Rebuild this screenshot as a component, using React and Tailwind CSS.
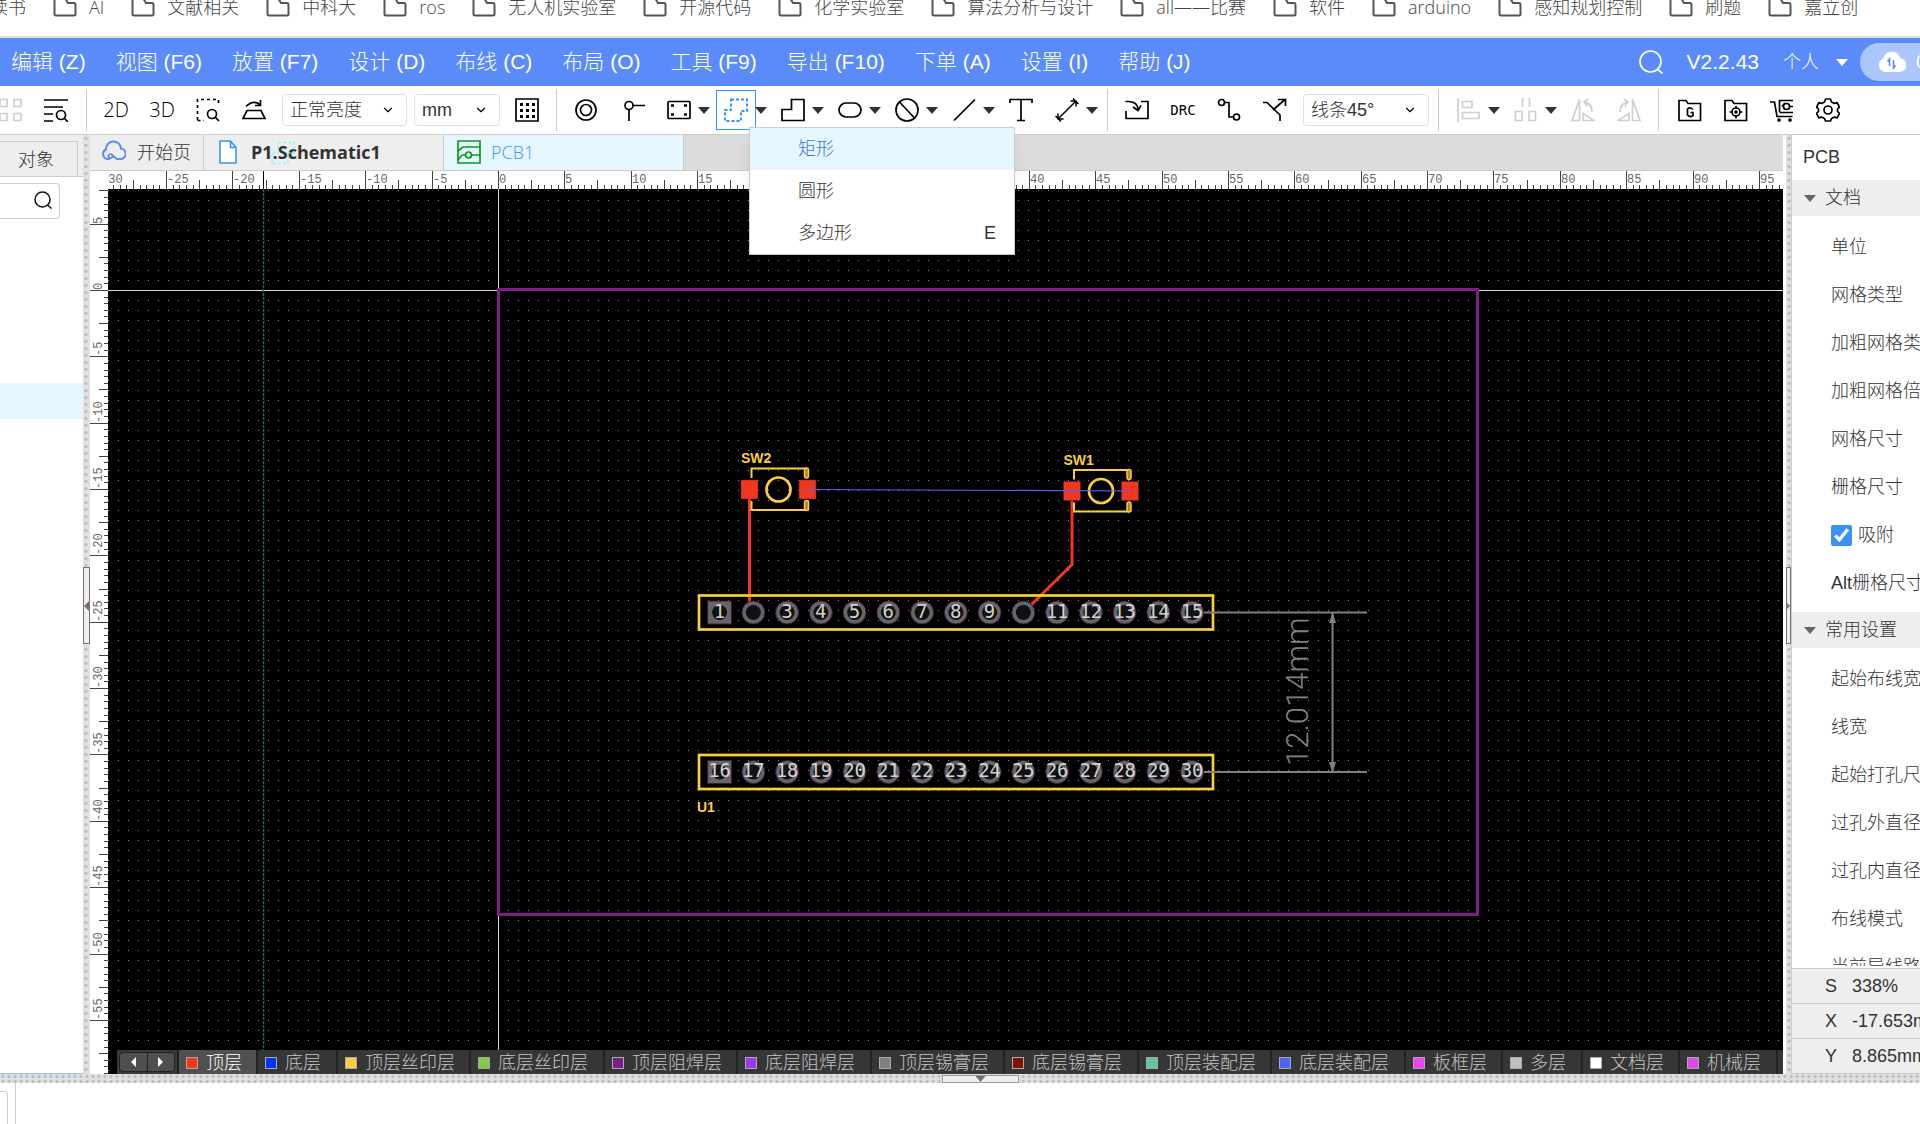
import React, { useState } from 'react'
import { ChevronDown } from 'lucide-react'

const bookmarks = ['AI', '文献相关', '中科大', 'ros', '无人机实验室', '开源代码', '化学实验室', '算法分析与设计', 'all——比赛', '软件', 'arduino', '感知规划控制', '刷题', '嘉立创']

const menus = ['编辑 (Z)', '视图 (F6)', '放置 (F7)', '设计 (D)', '布线 (C)', '布局 (O)', '工具 (F9)', '导出 (F10)', '下单 (A)', '设置 (I)', '帮助 (J)']

const layers = [
  { name: '顶层', color: 'bg-[#f0371f]' },
  { name: '底层', color: 'bg-[#0433ff]' },
  { name: '顶层丝印层', color: 'bg-[#fbcd3f]' },
  { name: '底层丝印层', color: 'bg-[#7fca4b]' },
  { name: '顶层阻焊层', color: 'bg-[#7b1f84]' },
  { name: '底层阻焊层', color: 'bg-[#9a38f5]' },
  { name: '顶层锡膏层', color: 'bg-[#808080]' },
  { name: '底层锡膏层', color: 'bg-[#7d150c]' },
  { name: '顶层装配层', color: 'bg-[#5fc79a]' },
  { name: '底层装配层', color: 'bg-[#4f62fb]' },
  { name: '板框层', color: 'bg-[#ee44f5]' },
  { name: '多层', color: 'bg-[#c0c0c0]' },
  { name: '文档层', color: 'bg-white' },
  { name: '机械层', color: 'bg-[#dd4ae8]' },
]

const docRows = ['单位', '网格类型', '加粗网格类型', '加粗网格倍数', '网格尺寸', '栅格尺寸']
const commonRows = ['起始布线宽度', '线宽', '起始打孔尺寸', '过孔外直径', '过孔内直径', '布线模式', '当前导线路径']

const status = [
  ['S', '338%'],
  ['X', '-17.653mm'],
  ['Y', '8.865mm'],
]

// board origin inside the canvas, and the pixels between two ruler ticks
const ORIGIN = { x: 390, y: 101 }
const STEP = 6.637

function Icon({ children, className = '' }) {
  return (
    <svg viewBox="0 0 24 24" width="24" height="24" fill="none" stroke="currentColor" strokeWidth="1.7" className={className} aria-hidden="true">
      {children}
    </svg>
  )
}

function Caret({ className = '' }) {
  return (
    <svg viewBox="0 0 12 7" width="12" height="7" className={className} aria-hidden="true">
      <path d="M0 0H12L6 7Z" fill="currentColor" />
    </svg>
  )
}

function Tool({ label, muted, children }) {
  return (
    <button type="button" aria-label={label} className={`mr-[22px] flex h-6 w-6 shrink-0 items-center justify-center last:mr-0 ${muted ? 'text-[#cfcfcf]' : 'text-black'}`}>
      {children}
    </button>
  )
}

function SplitTool({ label, muted, active, menu, children }) {
  return (
    <div className="relative mr-[14px] flex w-[43px] shrink-0 items-center justify-between last:mr-0">
      <button
        type="button"
        aria-label={label}
        className={`flex h-6 w-6 items-center justify-center ${muted ? 'text-[#cfcfcf]' : ''} ${active ? 'text-[#3093f7] outline outline-1 outline-offset-[7px] outline-[#3093f7]' : ''}`}
      >
        {children}
      </button>
      <button type="button" aria-label={`${label} 更多`} className="text-[#333]">
        <Caret />
      </button>
      {menu}
    </div>
  )
}

function ToolSelect({ label, options, className }) {
  return (
    <div className={`relative h-8 shrink-0 ${className}`}>
      <select aria-label={label} className="h-full w-full appearance-none rounded-sm border border-[#dcdfe6] bg-white pl-[7px] text-lg leading-none text-[#333]">
        {options.map((o) => <option key={o}>{o}</option>)}
      </select>
      <ChevronDown size={14} className="pointer-events-none absolute right-3 top-[9px] text-black" />
    </div>
  )
}

function RegionMenu() {
  return (
    <ul className="absolute left-[25px] top-[29px] z-20 w-[266px] border border-[#ccc] bg-white text-lg text-[#333] shadow-lg">
      {[['矩形', ''], ['圆形', ''], ['多边形', 'E']].map(([name, key]) => (
        <li key={name} className="h-[42px] first:bg-[#e6f6ff] first:text-[#3a78d0]">
          <button type="button" className="flex h-full w-full items-center justify-between pl-12 pr-[18px]">
            <span>{name}</span>
            <span>{key}</span>
          </button>
        </li>
      ))}
    </ul>
  )
}

function BookmarkBar() {
  return (
    <nav className="h-[38px] shrink-0 overflow-hidden border-b-2 border-[#dcdcdc] bg-white font-['Open_Sans','Noto_Sans_CJK_SC',sans-serif] text-lg text-[#444]">
      <div className="-mt-3 -ml-2.5 flex h-[38px] items-center gap-[27px] whitespace-nowrap">
        <a href="#read">读书</a>
        {bookmarks.map((name) => (
          <a key={name} href={`#${name}`} className="flex items-center gap-3">
            <svg viewBox="0 0 24 20" width="24" height="20" fill="none" stroke="#555" strokeWidth="2" className="shrink-0" aria-hidden="true">
              <path d="M1.5 3Q1.5 1 3.500 1H12L15 6H21Q22.500 6 22.500 8V17Q22.500 18.500 21 18.500H3Q1.500 18.500 1.500 17Z" />
            </svg>
            {name}
          </a>
        ))}
      </div>
    </nav>
  )
}

function MenuBar() {
  return (
    <header className="flex h-12 shrink-0 items-center justify-between overflow-hidden bg-[#5a8bf8] pl-[11px] text-[21px] text-white">
      <nav className="flex gap-[30px] whitespace-nowrap">
        {menus.map((m) => <button type="button" key={m}>{m}</button>)}
      </nav>
      <div className="flex shrink-0 items-center">
        <button type="button" aria-label="搜索" className="mr-6">
          <Icon className="block">
            <circle cx="11.500" cy="11.500" r="10.500" />
            <path d="M19 19.500L23.500 23.500" />
          </Icon>
        </button>
        <span className="mr-6">V2.2.43</span>
        <button type="button" className="mr-3 flex items-center gap-[17px] text-lg">个人 <Caret /></button>
        <button type="button" className="flex h-[38px] w-[60px] items-center gap-[10px] overflow-hidden rounded-l-full bg-[#acc5fb] pl-[18px] text-lg">
          <svg viewBox="0 0 28 22" width="28" height="22" className="shrink-0" aria-hidden="true">
            <path d="M7 21A7 7 0 0 1 5.500 7.500A8.500 8.500 0 0 1 22 7A7 7 0 0 1 21 21Z" fill="#fff" />
            <path d="M11.500 15V8L9.500 10.500M15.500 9V17L17.500 14.500" fill="none" stroke="#5a8bf8" strokeWidth="1.600" />
          </svg>
          0
        </button>
      </div>
    </header>
  )
}

function Toolbar() {
  return (
    <div className="flex h-[49px] shrink-0 border-b border-[#ccc] bg-white">
      <div className="flex w-full items-center">
        <div className="-ml-0.5 flex h-[42px] shrink-0 items-center border-r border-[#ccc] pr-[18px]">
          <Tool label="网格" muted>
            <Icon><path d="M2 1.500h7v7H2zM16 1.500h7v7h-7zM2 15.500h7v7H2zM16 15.500h7v7h-7z" /></Icon>
          </Tool>
          <Tool label="查找">
            <Icon>
              <path d="M0 2H24M0 9H19M0 16H9M0 23H9" />
              <circle cx="17" cy="17" r="4.500" />
              <path d="M20.500 20.500L24 24" />
            </Icon>
          </Tool>
        </div>

        <div className="flex h-[42px] shrink-0 items-center border-r border-[#ccc] pl-[17px] pr-[17px]">
          <Tool label="2D"><span className="font-['Open_Sans',sans-serif] text-xl">2D</span></Tool>
          <Tool label="3D"><span className="font-['Open_Sans',sans-serif] text-xl">3D</span></Tool>
          <Tool label="框选缩放">
            <Icon>
              <path d="M1.500 22V1.500H22.500V8M1.500 22.500H8" strokeDasharray="3 3" />
              <circle cx="16" cy="16" r="4.500" />
              <path d="M19.500 19.500L23 23" />
            </Icon>
          </Tool>
          <Tool label="翻转">
            <Icon>
              <path d="M1 20.500L5 12.500H19L23 20.500Z" />
              <path d="M4 8.500Q11 1.500 18 6.500M18.500 2V7.500H13" />
            </Icon>
          </Tool>
          <ToolSelect label="亮度" options={['正常亮度']} className="-ml-1.5 mr-[7px] w-[125px]" />
          <ToolSelect label="单位" options={['mm', 'mil']} className="mr-[15px] w-[86px]" />
          <Tool label="网格设置">
            <Icon>
              <path d="M1 1H23V23H1Z" />
              <path d="M5 6.500H20M5 12.500H20M5 18.500H20" strokeWidth="3" strokeDasharray="3 3" />
            </Icon>
          </Tool>
        </div>

        <div className="flex h-[42px] shrink-0 items-center border-r border-[#ccc] pl-[18px] pr-[9px]">
          <Tool label="焊盘">
            <Icon><circle cx="11" cy="12" r="10" /><circle cx="11" cy="12" r="5.500" /></Icon>
          </Tool>
          <Tool label="过孔">
            <Icon><circle cx="8" cy="7.500" r="4" /><path d="M12 7.500H24M8 11.500V23" /></Icon>
          </Tool>
          <SplitTool label="器件">
            <Icon>
              <rect x="1" y="3.500" width="22" height="17" rx="1" />
              <path d="M4 7.500h3M17 7.500h3M4 16.500h3M17 16.500h3" strokeWidth="2.500" />
            </Icon>
          </SplitTool>
          <SplitTool label="禁止区域" active menu={<RegionMenu />}>
            <Icon><path d="M7 1.500H23V13H17V23H1V12H7Z" strokeDasharray="3 2" strokeWidth="2" /></Icon>
          </SplitTool>
          <SplitTool label="铺铜">
            <Icon><path d="M10.500 1.500H23V22.500H1V11.500H10.500Z" /></Icon>
          </SplitTool>
          <SplitTool label="槽孔">
            <Icon><rect x="1" y="5" width="22" height="14" rx="7" /></Icon>
          </SplitTool>
          <SplitTool label="禁止">
            <Icon><circle cx="12" cy="12" r="11" /><path d="M4.500 4L19.500 20" /></Icon>
          </SplitTool>
          <SplitTool label="线条">
            <Icon><path d="M2 22.500L23 1.500" /></Icon>
          </SplitTool>
          <Tool label="文本">
            <Icon><path d="M1 5V1.500H23V5M12 1.500V22.500M8 22.500H16" /></Icon>
          </Tool>
          <SplitTool label="尺寸">
            <Icon><path d="M3 21L21 3M15.500 3H21V8.500M3 15.500V21H8.500M18 0.500L23.500 6M0.500 18L6 23.500" strokeWidth="1.5" /></Icon>
          </SplitTool>
        </div>

        <div className="flex h-[42px] shrink-0 items-center border-r border-[#ccc] pl-[17px] pr-[9px]">
          <Tool label="导入">
            <Icon><path d="M1 13V20.500H23V3.500H16M0.500 3.500H4Q13 4 13 12M8 9L13 12.500L16 7.500" /></Icon>
          </Tool>
          <Tool label="DRC"><span className="font-['DejaVu_Sans_Mono',monospace] text-sm">DRC</span></Tool>
          <Tool label="布线">
            <Icon><circle cx="4.500" cy="4.500" r="3" /><circle cx="19.500" cy="19" r="3" /><path d="M7.500 4.500H12V19H16.500" /></Icon>
          </Tool>
          <Tool label="差分布线">
            <Icon><path d="M0 4.500H4L17 17V23M10 12L22 1.500M15 1.500H22.500V8" /></Icon>
          </Tool>
          <ToolSelect label="拐角" options={['线条45°', '线条90°']} className="-ml-1.5 w-[126px]" />
        </div>

        <div className="flex h-[42px] shrink-0 items-center border-r border-[#ccc] pl-[18px] pr-[17px]">
          <SplitTool label="对齐" muted>
            <Icon><path d="M1 0V24M5.500 3.500H15V9.500H5.500ZM5.500 14.500H22V20.500H5.500Z" /></Icon>
          </SplitTool>
          <SplitTool label="分布" muted>
            <Icon><path d="M8.500 0V9M15.500 0V9M1.500 13.500H8V22.500H1.500ZM15 13.500H21.500V22.500H15Z" /></Icon>
          </SplitTool>
          <Tool label="左旋" muted>
            <Icon><path d="M8.500 1.500V22.500H1ZM12 15.500V22.500H23ZM13 4Q21 5 21 14M17 1L13 4L16.500 8.500" /></Icon>
          </Tool>
          <Tool label="右旋" muted>
            <Icon><path d="M15.500 1.500V22.500H23ZM12 15.500V22.500H1ZM11 4Q3 5 3 14M7 1L11 4L7.500 8.500" /></Icon>
          </Tool>
        </div>

        <div className="flex h-[42px] shrink-0 items-center pl-[19px]">
          <Tool label="Gerber">
            <Icon>
              <path d="M1 22.500V2.500H8L10 5.500H22.500V22.500Z" />
              <path d="M15 11.500Q12 8.500 9.500 11V17Q12 20 15 17.500V14.500H12.500" />
            </Icon>
          </Tool>
          <Tool label="坐标文件">
            <Icon>
              <path d="M1 22.500V2.500H8L10 5.500H22.500V22.500Z" />
              <circle cx="12" cy="14" r="4" />
              <circle cx="12" cy="14" r="1" fill="currentColor" />
              <path d="M12 8V11M12 17V20.500M5.500 14H9M15 14H18.500" />
            </Icon>
          </Tool>
          <Tool label="下单">
            <Icon>
              <path d="M0 4H4.500L7 18.500H22.500M9.500 14V2.500H23M9.500 14.500H23" />
              <circle cx="16.500" cy="8.500" r="3" />
              <path d="M19.500 8.500H23M12 8.500L15 5" />
              <circle cx="9" cy="22" r="1" fill="currentColor" />
              <circle cx="20" cy="22" r="1" fill="currentColor" />
            </Icon>
          </Tool>
          <Tool label="设置">
            <Icon>
              <path d="M9.500 1H14.500L15.500 4L18.500 5.500L21 4.500L23.500 9L21.500 11V13.500L23.500 15.500L21 20L18.500 19L15.500 20.500L14.500 23H9.500L8.500 20.500L5.500 19L3 20L0.500 15.500L2.500 13.500V11L0.500 9L3 4.500L5.500 5.500L8.500 4Z" strokeLinejoin="round" />
              <circle cx="12" cy="12" r="4" />
            </Icon>
          </Tool>
        </div>
      </div>
    </div>
  )
}

function SideSplitter({ flip }) {
  return (
    <div className={`relative shrink-0 bg-[#e0e0e0] bg-[radial-gradient(circle,#bdbdbd_1px,transparent_2px)] bg-[length:6px_7px] ${flip ? 'ml-[3px] w-[6px] border-r border-[#ccc]' : 'w-[7px]'}`}>
      <button type="button" aria-label="折叠面板" className="absolute inset-x-0 top-[432px] flex h-[77px] items-center justify-center border border-[#7a7070] bg-[#eee]">
        <svg viewBox="0 0 5 10" width="5" height="10" className={flip ? 'rotate-180' : ''} aria-hidden="true">
          <path d="M5 0V10L0 5Z" fill="#7a7070" />
        </svg>
      </button>
    </div>
  )
}

function LeftPanel() {
  return (
    <aside className="flex w-[83px] shrink-0 flex-col overflow-hidden border-b border-[#9ab8e8] bg-white text-lg text-[#333]">
      <div className="h-[42px] shrink-0 border-b border-[#ccc] bg-[#eee] pt-1.5">
        <button type="button" className="flex h-[35px] w-[78px] items-center border-r border-t border-[#ccc] pl-[18px] pt-0.5">对象</button>
      </div>
      <div className="relative mt-1.5 h-9 w-[60px]">
        <input type="search" aria-label="搜索对象" className="h-full w-full rounded-r-sm border border-l-0 border-[#ccc]" />
        <svg viewBox="0 0 18 18" width="18" height="18" fill="none" stroke="#111" strokeWidth="1.500" className="absolute right-2 top-2" aria-hidden="true">
          <circle cx="8.500" cy="8.500" r="7.500" />
          <path d="M13.500 14L17.500 17.500" />
        </svg>
      </div>
      <div className="mt-[164px] h-9 shrink-0 bg-[#e6f6ff]" />
    </aside>
  )
}

function Tabs() {
  return (
    <div className="flex h-9 shrink-0 border-b border-[#ccc] bg-[#dcdcdc] font-['Open_Sans','Noto_Sans_CJK_SC',sans-serif] text-lg text-[#333]">
      <button type="button" className="flex w-[114px] items-center gap-[11px] border-r border-[#ccc] bg-[#eee] pb-0.5 pl-3">
        <Icon className="text-[#5a8bf8]">
          <path d="M8 19H5.500A5 5 0 0 1 4 9.500A7.500 7.500 0 0 1 19 8.500A5.300 5.300 0 0 1 19 19H15L10 15" strokeWidth="2" />
          <circle cx="8.500" cy="16" r="2" />
        </Icon>
        开始页
      </button>
      <button type="button" className="relative flex w-[240px] items-center gap-[14px] border-r border-[#ccc] bg-[#eee] pb-0.5 pl-[15px] font-bold">
        <svg viewBox="0 0 18 24" width="18" height="24" fill="#fff" stroke="#3093f7" strokeWidth="1.500" aria-hidden="true">
          <path d="M1 1H11.500L17 7.500V23H1ZM11.500 1V7.500H17" />
        </svg>
        P1.Schematic1
        <svg viewBox="0 0 24 24" width="24" height="24" className="absolute left-[67px] top-[6px]" aria-hidden="true">
          <path d="M7 1.500H23V12H17V22.500H1V12H7Z" fill="none" stroke="#8ff3f8" strokeWidth="1.500" strokeDasharray="3 2" />
        </svg>
      </button>
      <button type="button" className="flex w-[240px] items-center gap-[10px] border-r border-[#ccc] bg-[#e6f6ff] pb-0.5 pl-[13px] text-[#3d96f7]">
        <Icon className="text-[#0a9a1a]">
          <path d="M1 1H23V23H1ZM1 11L6 7H23M1 20L5 15H8M15 15H23" />
          <circle cx="11.500" cy="15" r="3" />
        </Icon>
        PCB1
      </button>
    </div>
  )
}

// every tenth tick is a labelled major one, every fifth a middle one
const range = (from, to) => Array.from({ length: to - from + 1 }, (_, i) => from + i)
const tickLength = (i) => (i % 10 === 0 ? 18 : i % 5 === 0 ? 9 : 4)

function TopRuler() {
  return (
    <svg className="ml-[18px] block h-[18px] w-[calc(100%-18px)] shrink-0 bg-white font-['Liberation_Mono',monospace] text-xs" aria-hidden="true">
      {range(-60, 193).map((i) => {
        const x = Math.floor(ORIGIN.x + 0.4 + i * STEP)
        return (
          <g key={i}>
            <rect x={x} y={18 - tickLength(i)} width="1" height={tickLength(i)} fill="#444" />
            {i % 10 === 0 && <text x={x + 1} y="12" fill="#666">{i / 2}</text>}
          </g>
        )
      })}
      <rect x="155" y="0" width="1" height="18" fill="#000" />
    </svg>
  )
}

function LeftRuler() {
  return (
    <svg className="block h-full w-[18px] shrink-0 bg-white font-['Liberation_Mono',monospace] text-xs" aria-hidden="true">
      {range(-15, 118).map((i) => {
        const y = Math.floor(ORIGIN.y + 0.4 + i * STEP)
        return (
          <g key={i}>
            <rect x={18 - tickLength(i)} y={y} width={tickLength(i)} height="1" fill="#444" />
            {i % 10 === 0 && <text transform={`translate(12 ${y}) rotate(-90)`} fill="#666">{-i / 2}</text>}
          </g>
        )
      })}
    </svg>
  )
}

function Switch({ x, y, name }) {
  return (
    <g transform={`translate(${x} ${y})`}>
      <text x="0" y="-17" fill="#fbcd3f" fontSize="14" fontWeight="bold">{name}</text>
      <path d="M10.500 -2V-11.500H66M10.500 21V30H66" fill="none" stroke="#fbcd3f" strokeWidth="2" />
      <rect x="63.500" y="-12" width="4" height="10" rx="2" fill="#a8862a" stroke="#fbcd3f" strokeWidth="1.500" />
      <rect x="63.500" y="20.500" width="4" height="10" rx="2" fill="#a8862a" stroke="#fbcd3f" strokeWidth="1.500" />
      <rect x="0" y="0" width="17" height="19" fill="#f0371f" stroke="#5a1560" strokeWidth="0.500" />
      <rect x="58" y="0" width="17" height="19" fill="#f0371f" stroke="#5a1560" strokeWidth="0.500" />
      <circle cx="37.500" cy="9.500" r="12" fill="none" stroke="#fbcd3f" strokeWidth="2.700" />
    </g>
  )
}

function PinRow({ first, y }) {
  return (
    <g>
      <rect x="201" y={y - 17} width="514" height="34" fill="none" stroke="#fbcd3f" strokeWidth="2.700" />
      {Array.from({ length: 15 }, (_, i) => {
        const n = first + i
        const cx = 221.6 + 33.75 * i
        return (
          <g key={n}>
            {i === 0
              ? <rect x={cx - 12} y={y - 11.5} width="24" height="23" fill="#666" stroke="#3a1745" />
              : <circle cx={cx} cy={y} r="11.500" fill="#666" stroke="#3a1745" />}
            <circle cx={cx} cy={y} r="7.500" fill="#111" />
            {/* routed pins carry no number */}
            {n !== 2 && n !== 10 && (
              <text x={cx} y={y + 5} textAnchor="middle" fill="#d2d2d2" fontSize="19" className="font-['DejaVu_Sans_Mono',monospace]">{n}</text>
            )}
          </g>
        )
      })}
    </g>
  )
}

function Board() {
  return (
    <svg className="absolute inset-0 h-full w-full bg-black font-['Liberation_Sans',sans-serif]" role="img" aria-label="PCB1">
      <defs>
        <pattern id="dots" width="10" height="10" patternUnits="userSpaceOnUse">
          <rect x="0" y="1" width="1" height="1" fill="#8c8c8c" />
        </pattern>
      </defs>
      <rect width="100%" height="100%" fill="url(#dots)" />
      <rect x={ORIGIN.x} y="0" width="1" height="100%" fill="#ddd" />
      <rect x="0" y={ORIGIN.y} width="100%" height="1" fill="#ddd" />
      <line x1="155.500" y1="0" x2="155.500" y2="100%" stroke="#236468" strokeWidth="1.500" strokeDasharray="3 1" />
      <g transform={`translate(${ORIGIN.x} ${ORIGIN.y})`}>
        <rect x="0.500" y="-0.500" width="979" height="625" fill="none" stroke="#7b1f84" strokeWidth="3" />
        <path d="M251.500 209V315M574 210V274.500L533 315" fill="none" stroke="#f0371f" strokeWidth="3" />
        <Switch x={243} y={190} name="SW2" />
        <Switch x={565.5} y={191.5} name="SW1" />
        <path d="M310 199.500L632 201" stroke="#5c60ff" strokeWidth="1.200" />
        <PinRow first={1} y={322.5} />
        <PinRow first={16} y={482} />
        <text x="199" y="522" fill="#fbcd3f" fontSize="14" fontWeight="bold">U1</text>
        <path d="M706 322.500H869M706 482H869M834.500 323V482" stroke="#808080" strokeWidth="2" />
        <path d="M834.500 322L838 333H831ZM834.500 483L838 472H831Z" fill="#808080" />
        <text transform="translate(810 476) rotate(-90)" fill="#808080" fontSize="31" className="font-['Roboto',sans-serif]">12.014mm</text>
      </g>
    </svg>
  )
}

function LayerBar() {
  const [current, setCurrent] = useState('顶层')

  return (
    <div className="relative ml-[9px] mt-auto flex h-6 w-full overflow-hidden bg-[#363636] text-lg leading-6">
      <div className="flex w-[62px] shrink-0 items-center border-r-2 border-[#222] bg-[#3a3a3a] p-0.5">
        <div className="flex h-full w-full divide-x divide-[#222] rounded border border-[#222] bg-[#4f4f4f]">
          <button type="button" aria-label="上一层" className="flex flex-1 items-center justify-center">
            <svg viewBox="0 0 5 10" width="5" height="10"><path d="M5 0V10L0 5Z" fill="#fff" /></svg>
          </button>
          <button type="button" aria-label="下一层" className="flex flex-1 items-center justify-center">
            <svg viewBox="0 0 5 10" width="5" height="10"><path d="M0 0V10L5 5Z" fill="#fff" /></svg>
          </button>
        </div>
      </div>
      {layers.map((l) => (
        <button
          type="button"
          key={l.name}
          onClick={() => setCurrent(l.name)}
          className={`flex shrink-0 items-center gap-2 border-r-2 border-[#222] pl-[7px] pr-[14px] pt-px odd:pr-[15px] ${current === l.name ? 'bg-[#505050] text-white' : 'text-[#c4c4c4]'}`}
        >
          <span className={`h-3 w-3 border border-[#aaa] ${l.color}`} />
          {l.name}
        </button>
      ))}
    </div>
  )
}

function SectionTitle({ children }) {
  return (
    <h2 className="flex h-9 shrink-0 items-center gap-2 bg-[#eee] pl-[11px]">
      <Caret className="w-[14px] shrink-0 text-[#666]" />
      {children}
    </h2>
  )
}

function RightPanel() {
  return (
    <aside className="flex w-32 shrink-0 flex-col overflow-hidden whitespace-nowrap bg-white text-lg text-[#333]">
      <div className="flex h-[45px] shrink-0 items-center pb-0.5 pl-[11px]">PCB</div>
      <div className="min-h-0 flex-1 overflow-hidden">
        <SectionTitle>文档</SectionTitle>
        <div className="pb-[5px] pl-[39px] pt-[7px]">
          {docRows.map((r) => <div key={r} className="flex h-12 items-center">{r}</div>)}
          <label className="flex h-12 items-center gap-1.5">
            <input type="checkbox" defaultChecked className="h-[21px] w-[21px] accent-[#3b91f7]" />
            吸附
          </label>
          <div className="flex h-12 items-center">Alt栅格尺寸</div>
        </div>
        <SectionTitle>常用设置</SectionTitle>
        <div className="pb-[5px] pl-[39px] pt-[7px]">
          {commonRows.map((r) => <div key={r} className="flex h-12 items-center">{r}</div>)}
        </div>
      </div>
      <dl className="mt-0.5 shrink-0 border-b border-[#ccc] bg-[#eee]">
        {status.map(([k, v]) => (
          <div key={k} className="flex h-[35px] items-center border-t border-[#ccc] pl-[33px]">
            <dt className="w-[27px] shrink-0">{k}</dt>
            <dd>{v}</dd>
          </div>
        ))}
      </dl>
    </aside>
  )
}

function BottomDock() {
  return (
    <footer className="shrink-0">
      <div className="flex h-[9px] justify-center bg-[#e0e0e0] bg-[radial-gradient(circle,#bdbdbd_1px,transparent_2px)] bg-[length:6px_5px] pl-10">
        <button type="button" aria-label="折叠底部面板" className="mt-px flex h-2 w-[77px] items-center justify-center border border-[#999] bg-[#eee] text-[#7a7070]">
          <Caret className="h-[6px] w-[11px]" />
        </button>
      </div>
      <div className="h-[41px] w-4 border-r border-[#ccc] pt-2">
        <div className="h-full w-2 rounded-tr border-r border-t border-[#ccc]" />
      </div>
    </footer>
  )
}

function App() {
  return (
    <div className="flex h-screen flex-col overflow-hidden bg-white font-['Liberation_Sans','Noto_Sans_CJK_SC',sans-serif] font-light">
      <BookmarkBar />
      <MenuBar />
      <Toolbar />
      <main className="flex min-h-0 flex-1">
        <LeftPanel />
        <SideSplitter />
        <section className="flex min-w-0 flex-1 flex-col">
          <Tabs />
          <TopRuler />
          <div className="flex min-h-0 flex-1">
            <LeftRuler />
            <div className="relative flex min-w-0 flex-1 overflow-hidden">
              <Board />
              <LayerBar />
            </div>
          </div>
        </section>
        <SideSplitter flip />
        <RightPanel />
      </main>
      <BottomDock />
    </div>
  )
}

export default App
